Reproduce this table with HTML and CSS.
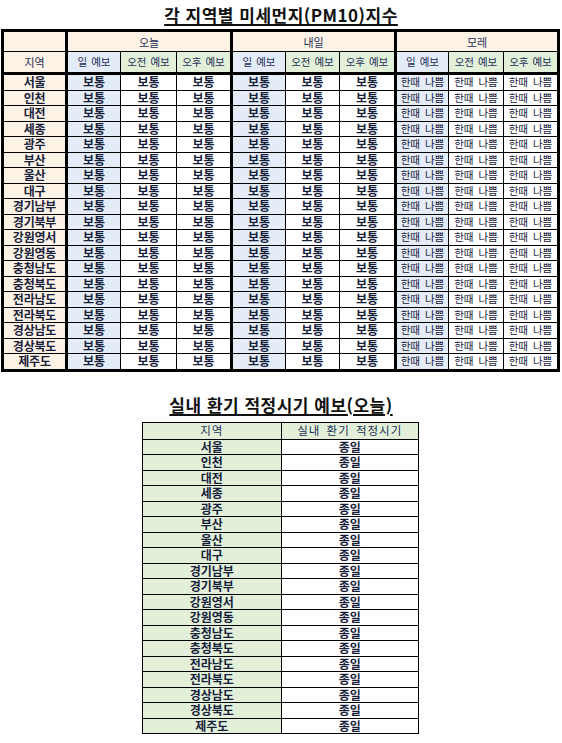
FILE: index.html
```html
<!DOCTYPE html>
<html lang="ko">
<head>
<meta charset="utf-8">
<link rel="stylesheet" href="styles.css">
</head>
<body>
<h1 class="title title-top">각 지역별 미세먼지(PM10)지수</h1>
<table class="dust">
  <colgroup>
    <col class="c-reg"><col class="c1"><col class="c2"><col class="c3"><col class="c4"><col class="c5"><col class="c6"><col class="c7"><col class="c8"><col class="c9">
  </colgroup>
  <thead>
    <tr class="h1">
      <th class="peach"></th>
      <th colspan="3" class="peach day thick-l">오늘</th>
      <th colspan="3" class="peach day thick-l">내일</th>
      <th colspan="3" class="peach day thick-l">모레</th>
    </tr>
    <tr class="h2">
      <th class="peach reg-h">지역</th>
      <th class="blue sub thick-l">일 예보</th><th class="green sub">오전 예보</th><th class="green sub">오후 예보</th>
      <th class="blue sub thick-l">일 예보</th><th class="green sub">오전 예보</th><th class="green sub">오후 예보</th>
      <th class="blue sub thick-l">일 예보</th><th class="green sub">오전 예보</th><th class="green sub">오후 예보</th>
    </tr>
  </thead>
  <tbody id="dust-body"></tbody>
</table>

<h1 class="title title-bottom">실내 환기 적정시기 예보(오늘)</h1>
<table class="vent">
  <colgroup><col class="v1"><col class="v2"></colgroup>
  <thead>
    <tr class="vh"><th class="green vreg-h">지역</th><th class="green vhead">실내 환기 적정시기</th></tr>
  </thead>
  <tbody id="vent-body"></tbody>
</table>
<script src="script.js"></script>
</body>
</html>
```

FILE: script.js
```js
var regions = ["서울","인천","대전","세종","광주","부산","울산","대구","경기남부","경기북부","강원영서","강원영동","충청남도","충청북도","전라남도","전라북도","경상남도","경상북도","제주도"];
var db = document.getElementById("dust-body");
var vb = document.getElementById("vent-body");
regions.forEach(function (r) {
  var tr = document.createElement("tr");
  var h = '<td class="peach reg">' + r + '</td>';
  for (var d = 0; d < 2; d++) {
    h += '<td class="blue val thick-l">보통</td><td class="val">보통</td><td class="val">보통</td>';
  }
  h += '<td class="blue bad thick-l">한때 나쁨</td><td class="bad">한때 나쁨</td><td class="bad">한때 나쁨</td>';
  tr.innerHTML = h;
  db.appendChild(tr);
  var vr = document.createElement("tr");
  vr.innerHTML = '<td class="green vreg">' + r + '</td><td class="vval">종일</td>';
  vb.appendChild(vr);
});
```

FILE: styles.css
```css
html, body {
  margin: 0;
  padding: 0;
  background: #ffffff;
}
body {
  width: 562px;
  font-family: "Noto Sans CJK KR", "Noto Sans", sans-serif;
  color: #141414;
}
.title {
  margin: 0;
  text-align: center;
  font-size: 17px;
  font-weight: 700;
  text-decoration: underline;
  text-decoration-thickness: 2px;
  text-underline-offset: 2px;
  color: #111;
  line-height: 20px;
  letter-spacing: 0.5px;
}
.title-top {
  padding-top: 5px;
  height: 28px;
  box-sizing: border-box;
}
.title-bottom {
  margin-top: 21px;
  height: 28px;
  padding-top: 2px;
  box-sizing: border-box;
}

table {
  border-collapse: collapse;
  table-layout: fixed;
}
th, td {
  padding: 0;
  text-align: center;
  white-space: nowrap;
}

/* dust table */
.dust {
  margin-left: 1px;
  margin-top: 1px;
  width: 559px;
  border: 3px solid #000;
}
.dust th, .dust td {
  border: 1px solid #000;
}
.c-reg { width: 64px; }
.c1 { width: 54px; }
.c2 { width: 56px; }
.c3 { width: 55px; }
.c4 { width: 54px; }
.c5 { width: 54px; }
.c6 { width: 56px; }
.c7 { width: 53px; }
.c8 { width: 55px; }
.c9 { width: 55px; }

.dust th.thick-l, .dust td.thick-l {
  border-left: 3px solid #000;
}
.dust .h1 th {
  height: 19px;
  line-height: 16px;
  font-size: 11px;
  font-weight: 400;
  color: #1e2f57;
}
.dust .h2 th {
  height: 20px;
  line-height: 16px;
  font-size: 10.5px;
  font-weight: 400;
  color: #1e2f57;
  border-bottom: 3px solid #000;
  word-spacing: 1px;
}
.dust .h2 th.reg-h {
  font-size: 11px;
}
.dust tbody td {
  height: 14.5px;
  line-height: 14px;
}
.dust td.reg {
  font-size: 12px;
  font-weight: 700;
  color: #17203a;
  letter-spacing: -0.2px;
}
.dust td.val {
  font-size: 12px;
  font-weight: 700;
  color: #17203a;
}
.dust td.bad {
  font-size: 10.5px;
  font-weight: 400;
  color: #17203a;
  word-spacing: 2px;
}

.peach { background: #fdf2e6; }
.blue { background: #e4ecf7; }
.green { background: #e2f0d9; }

/* vent table */
.vent {
  margin-left: 142px;
  margin-top: 1px;
  width: 277px;
  border: 1.5px solid #000;
}
.vent th, .vent td {
  border: 1px solid #000;
}
.v1 { width: 138px; }
.v2 { width: 137px; }
.vent .vh th {
  height: 16px;
  line-height: 15px;
  font-size: 11.5px;
  font-weight: 400;
  color: #1e2f57;
  letter-spacing: 1px;
  word-spacing: 2px;
}
.vent tbody td {
  height: 14.5px;
  line-height: 14px;
}
.vent td.vreg {
  font-size: 12px;
  font-weight: 700;
  color: #17203a;
}
.vent td.vval {
  font-size: 12px;
  font-weight: 700;
  color: #17203a;
}
```
